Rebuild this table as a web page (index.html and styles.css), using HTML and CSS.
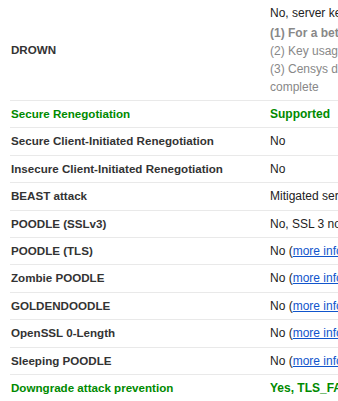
FILE: index.html
```html
<!DOCTYPE html>
<html lang="en">
<head>
    <meta charset="UTF-8">
    <meta name="viewport" content="width=device-width, initial-scale=1.0">
    <title>SSL Report - Protocol Details</title>
    <link rel="stylesheet" href="styles.css">
</head>
<body>

    <!-- Protocol Details table -->
    <div class="report-section">
        <table class="report-table">
            <colgroup>
                <col class="col-left">
                <col class="col-right">
            </colgroup>
            <tr class="drown-row">
                <td class="table-left">DROWN</td>
                <td class="table-right">
                    <div class="drown-result">No, server key and hostname not seen elsewhere with SSLv2</div>
                    <div class="drown-notes">
                        <div class="note-strong">(1) For a better understanding of this test, please read <a href="#">this longer explanation</a></div>
                        <div>(2) Key usage data kindly provided by the <a href="#">Censys</a> network search engine; original DROWN website <a href="#">here</a></div>
                        <div>(3) Censys data is only indicative of possible key and certificate reuse; possibly out-of-date and not complete</div>
                    </div>
                </td>
            </tr>
            <tr class="good">
                <td class="table-left">Secure Renegotiation</td>
                <td class="table-right">Supported</td>
            </tr>
            <tr>
                <td class="table-left">Secure Client-Initiated Renegotiation</td>
                <td class="table-right">No</td>
            </tr>
            <tr>
                <td class="table-left">Insecure Client-Initiated Renegotiation</td>
                <td class="table-right">No</td>
            </tr>
            <tr>
                <td class="table-left">BEAST attack</td>
                <td class="table-right">Mitigated server-side (<a href="#">more info</a>)</td>
            </tr>
            <tr>
                <td class="table-left">POODLE (SSLv3)</td>
                <td class="table-right">No, SSL 3 not supported (<a href="#">more info</a>)</td>
            </tr>
            <tr>
                <td class="table-left">POODLE (TLS)</td>
                <td class="table-right">No (<a href="#">more info</a>)</td>
            </tr>
            <tr>
                <td class="table-left">Zombie POODLE</td>
                <td class="table-right">No (<a href="#">more info</a>)</td>
            </tr>
            <tr>
                <td class="table-left">GOLDENDOODLE</td>
                <td class="table-right">No (<a href="#">more info</a>)</td>
            </tr>
            <tr>
                <td class="table-left">OpenSSL 0-Length</td>
                <td class="table-right">No (<a href="#">more info</a>)</td>
            </tr>
            <tr>
                <td class="table-left">Sleeping POODLE</td>
                <td class="table-right">No (<a href="#">more info</a>)</td>
            </tr>
            <tr class="good">
                <td class="table-left">Downgrade attack prevention</td>
                <td class="table-right">Yes, TLS_FALLBACK_SCSV supported (<a href="#">more info</a>)</td>
            </tr>
        </table>
    </div>

</body>
</html>
```

FILE: styles.css
```css
/* Global Styles */
body {
    font-family: 'Liberation Sans', Arial, sans-serif;
    font-size: 12px;
    color: #222;
    background-color: #ffffff;
    margin: 0;
    padding: 0;
    overflow: hidden;
}

/* Report section */
.report-section {
    padding-left: 10px;
    width: 860px;
}

.report-table {
    width: 860px;
    table-layout: fixed;
    border-collapse: collapse;
}

.col-left {
    width: 260px;
}

.report-table td {
    padding: 6px 0;
    line-height: 14.4px;
    border-bottom: 1px solid #e9e9e9;
    vertical-align: middle;
    white-space: nowrap;
}

.report-table .table-left {
    padding-left: 1px;
    font-size: 11.6px;
    font-weight: bold;
    color: #333;
}

.table-right {
    color: #222;
}

.table-right a {
    color: #1155cc;
    text-decoration: underline;
}

/* Highlighted rows */
.good .table-left,
.good .table-right {
    color: #008a00;
    font-weight: bold;
}

/* DROWN row */
.report-table .drown-row td {
    padding-top: 4px;
    padding-bottom: 4px;
    white-space: normal;
}

.drown-result {
    line-height: 18px;
    margin-bottom: 2px;
}

.drown-notes {
    width: 565px;
    line-height: 18px;
    color: #888;
}

.drown-notes a {
    color: #888;
}

.note-strong {
    font-weight: bold;
}
```
